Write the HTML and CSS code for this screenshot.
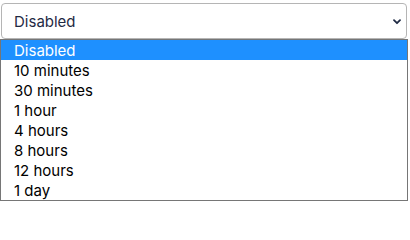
FILE: index.html
```html
<!DOCTYPE html>
<html>
<head>
<meta charset="utf-8">
<link rel="stylesheet" href="styles.css">
</head>
<body>
<div class="wrap">
  <div class="select">
    <span class="value">Disabled</span>
    <svg class="chev" width="8" height="6" viewBox="0 0 8 6"><path d="M1 1.2 L4 4.2 L7 1.2" fill="none" stroke="#1f2a44" stroke-width="1.8" stroke-linecap="round" stroke-linejoin="round"/></svg>
  </div>
  <ul class="menu">
    <li class="opt selected">Disabled</li>
    <li class="opt">10 minutes</li>
    <li class="opt">30 minutes</li>
    <li class="opt">1 hour</li>
    <li class="opt">4 hours</li>
    <li class="opt">8 hours</li>
    <li class="opt">12 hours</li>
    <li class="opt">1 day</li>
  </ul>
</div>
</body>
</html>
```
FILE: styles.css
```css
html, body {
  margin: 0;
  padding: 0;
  background: #fff;
}
body {
  font-family: Inter, "Noto Sans", sans-serif;
}
.wrap {
  padding: 3px 0 0 0;
  width: 408px;
}
.select {
  box-sizing: border-box;
  margin-left: 1px;
  width: 406px;
  height: 36px;
  border: 1px solid #b5b5b5;
  border-radius: 4px;
  display: flex;
  align-items: center;
  justify-content: space-between;
  padding: 0 5px 0 12px;
  color: #1f2a44;
  font-size: 15px;
}
.chev {
  display: block;
  margin-top: 1px;
}
.menu {
  list-style: none;
  margin: 0;
  padding: 0;
  box-sizing: border-box;
  width: 408px;
  border: 1px solid #767676;
  display: flex;
  flex-direction: column;
}
.opt {
  box-sizing: border-box;
  height: 20px;
  line-height: 20px;
  padding: 1px 0 0 13px;
  font-size: 15px;
  color: #000;
  overflow: hidden;
}
.opt.selected {
  background: #1e90ff;
  color: #fff;
}
```
